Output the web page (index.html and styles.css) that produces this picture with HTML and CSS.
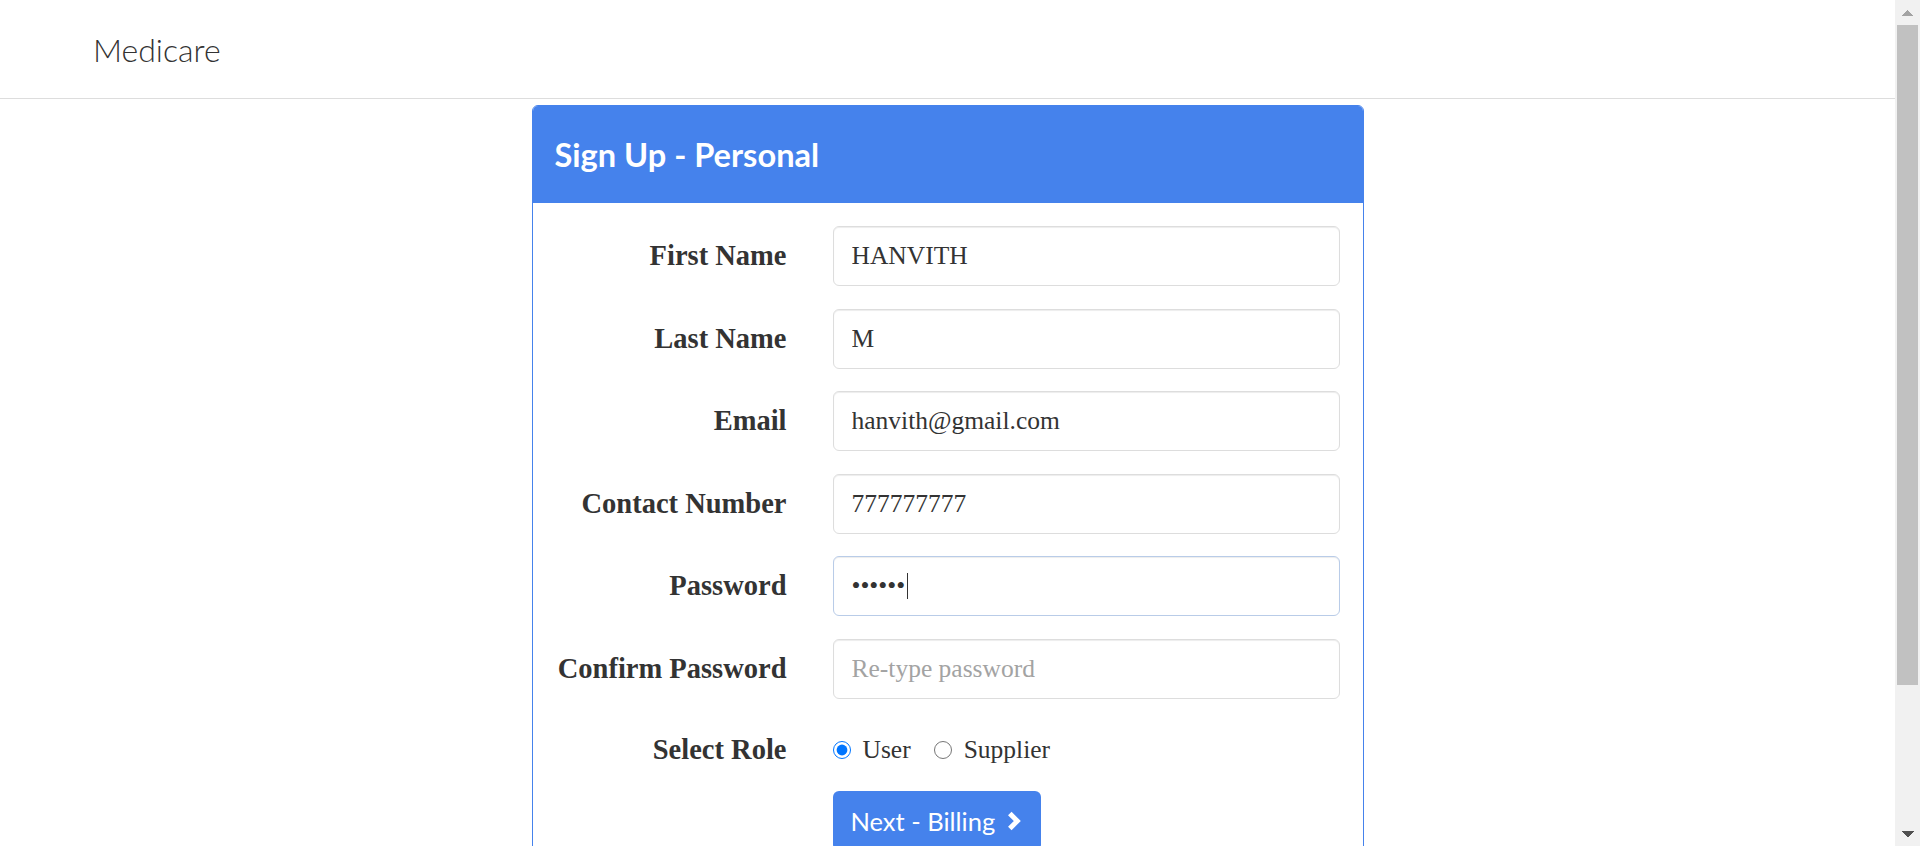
FILE: index.html
```html
<!DOCTYPE html>
<html lang="en">
<head>
<meta charset="utf-8">
<title>Medicare - Sign Up</title>
<link rel="stylesheet" href="styles.css">
</head>
<body>
<div class="viewport">
  <nav class="navbar">
    <a class="brand" href="#">Medicare</a>
  </nav>
  <main class="page">
    <section class="card">
      <header class="card-head">
        <h3 class="card-title">Sign Up - Personal</h3>
      </header>
      <form class="card-body">
        <div class="row">
          <label class="label" for="fn">First Name</label>
          <input class="field" id="fn" type="text" value="HANVITH">
        </div>
        <div class="row">
          <label class="label" for="ln">Last Name</label>
          <input class="field" id="ln" type="text" value="M">
        </div>
        <div class="row">
          <label class="label" for="em">Email</label>
          <input class="field" id="em" type="text" value="hanvith@gmail.com">
        </div>
        <div class="row">
          <label class="label" for="cn">Contact Number</label>
          <input class="field" id="cn" type="text" value="777777777">
        </div>
        <div class="row">
          <label class="label" for="pw">Password</label>
          <div class="field-wrap">
            <input class="field field-active" id="pw" type="password" value="secret">
            <span class="caret"></span>
          </div>
        </div>
        <div class="row">
          <label class="label" for="cpw">Confirm Password</label>
          <input class="field" id="cpw" type="password" placeholder="Re-type password">
        </div>
        <div class="row row-radio">
          <span class="label">Select Role</span>
          <div class="radios">
            <label class="opt"><input class="radio" type="radio" name="role" checked><span>User</span></label>
            <label class="opt"><input class="radio" type="radio" name="role"><span>Supplier</span></label>
          </div>
        </div>
        <div class="row row-btn">
          <span></span>
          <div>
            <button class="btn" type="button">Next - Billing
              <svg class="chev" width="15" height="20" viewBox="0 0 15 20" aria-hidden="true"><polyline points="2.8,2.5 10.3,10 2.8,17.5" fill="none" stroke="#fff" stroke-width="5" stroke-linejoin="miter"/></svg>
            </button>
          </div>
        </div>
      </form>
    </section>
  </main>
</div>
<aside class="scrollbar" aria-hidden="true">
  <div class="sb-btn sb-up"></div>
  <div class="sb-thumb"></div>
  <div class="sb-track"></div>
  <div class="sb-btn sb-down"></div>
</aside>
</body>
</html>
```

FILE: styles.css
```css
html, body {
  margin: 0;
  padding: 0;
  background: #fff;
}

body {
  display: flex;
  align-items: flex-start;
  font-family: "Liberation Serif", "Times New Roman", serif;
  color: #333;
}

.viewport {
  flex: 1;
  min-width: 0;
}

/* fake browser scrollbar */
.scrollbar {
  width: 25px;
  height: 846px;
  flex: none;
  display: flex;
  flex-direction: column;
  background: #f1f1f1;
}
.sb-btn {
  height: 25px;
  flex: none;
  background-repeat: no-repeat;
  background-position: center;
  background-size: 12px 6px;
}
.sb-up {
  background-image: conic-gradient(from 135deg at 50% 0, #a3a3a3 90deg, transparent 0);
}
.sb-down {
  background-image: conic-gradient(from -45deg at 50% 100%, #505050 90deg, transparent 0);
}
.sb-thumb {
  height: 660px;
  margin: 0 2px;
  background: #c1c1c1;
  flex: none;
}
.sb-track {
  flex: 1;
}

.navbar {
  height: 98px;
  border-bottom: 1px solid #ddd;
  display: flex;
  align-items: center;
  padding-left: 93px;
}

.brand {
  font-family: "Lato", "Open Sans", sans-serif;
  font-weight: 300;
  font-size: 32px;
  color: #333;
  text-decoration: none;
}

.page {
  padding-top: 6px;
  padding-bottom: 145px;
}

.card {
  width: 832px;
  box-sizing: border-box;
  margin: 0 auto;
  border: 1px solid #4582ec;
  border-radius: 6px;
  overflow: hidden;
  background: #fff;
}

.card-head {
  height: 97px;
  background: #4582ec;
  display: flex;
  align-items: center;
  padding-left: 22px;
}

.card-title {
  margin: 0;
  font-family: "Lato", "Open Sans", sans-serif;
  font-weight: 700;
  font-size: 32.6px;
  color: #fff;
}

.card-body {
  padding: 23px 23px 23px;
  margin: 0;
}

.row {
  display: grid;
  grid-template-columns: 231px 507px;
  column-gap: 46px;
  align-items: center;
  margin-bottom: 22.5px;
}

.label {
  text-align: right;
  font-weight: 700;
  font-size: 28.5px;
  color: #333;
}

.field-wrap {
  position: relative;
}

.field {
  box-sizing: border-box;
  display: block;
  height: 60px;
  width: 507px;
  margin: 0;
  padding: 0 18px;
  border: 1px solid #ddd;
  border-radius: 6px;
  box-shadow: inset 0 1px 1px rgba(0, 0, 0, 0.075);
  font-family: "Liberation Serif", "Times New Roman", serif;
  font-size: 25.5px;
  color: #333;
  background: #fff;
  outline: none;
  caret-color: #333;
}

.field::placeholder {
  color: #a3a3a3;
}

.field-active,
.field:focus {
  border-color: #b9cce8;
}

.caret {
  position: absolute;
  left: 74px;
  top: 17px;
  width: 1px;
  height: 26px;
  background: #333;
}

.row-radio {
  height: 58px;
  margin-bottom: 12px;
}

.radios {
  display: flex;
  align-items: center;
  gap: 23px;
}

.opt {
  display: flex;
  align-items: center;
  gap: 12px;
  font-size: 25.5px;
  color: #333;
}

.radio {
  width: 18px;
  height: 18px;
  margin: 0;
}

.row-btn {
  margin-bottom: 0;
}

.btn {
  display: inline-flex;
  align-items: center;
  gap: 12px;
  height: 60px;
  padding: 0 19px 0 18px;
  border: none;
  border-radius: 6px;
  background: #4582ec;
  color: #fff;
  font-family: "Lato", "Open Sans", sans-serif;
  font-weight: 400;
  font-size: 25.5px;
  cursor: pointer;
}

.chev {
  display: block;
}
```
